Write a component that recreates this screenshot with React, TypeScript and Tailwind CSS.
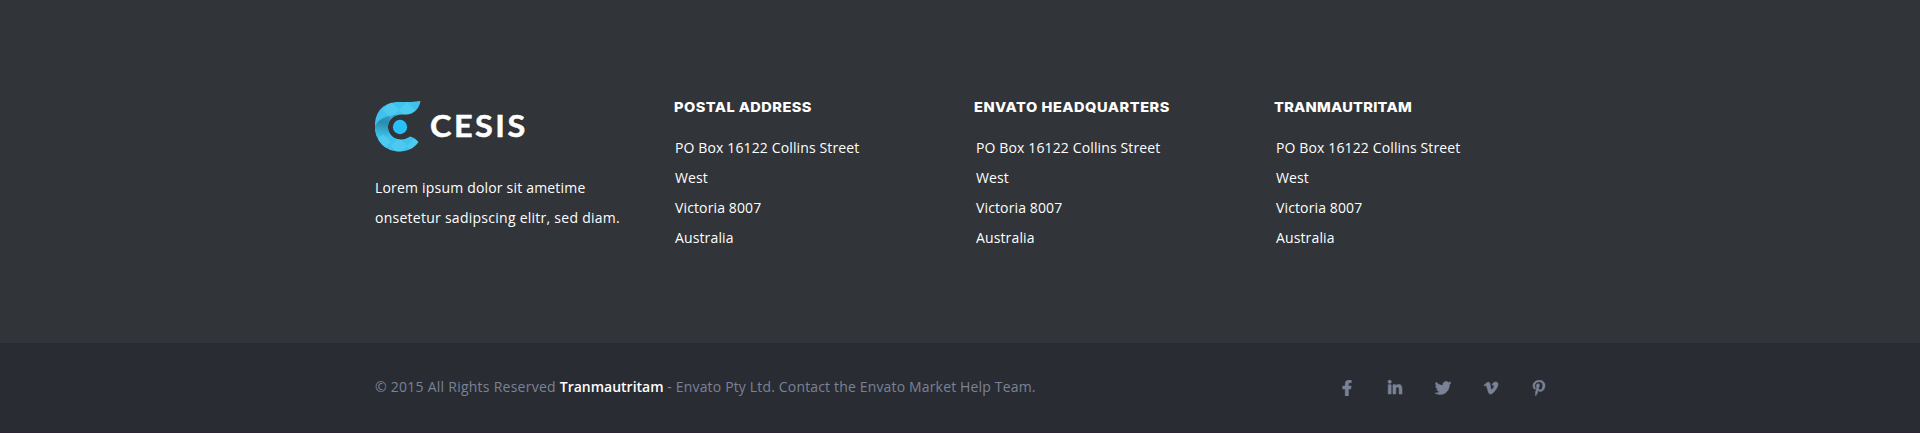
import React from "react";
import { FaFacebookF, FaLinkedinIn, FaTwitter, FaVimeoV, FaPinterestP } from "react-icons/fa";

function Mark() {
  return (
    <svg width="46" height="51" viewBox="0 0 46 51" className="shrink-0">
      <defs>
        <linearGradient id="fold" gradientUnits="userSpaceOnUse" x1="10" y1="15" x2="6" y2="36">
          <stop offset="0" stopColor="#2f9cc2" />
          <stop offset="0.3" stopColor="#2a8bad" />
          <stop offset="1" stopColor="#3fc3ee" />
        </linearGradient>
        <clipPath id="mark-shape">
          <path d="M0 25C0 9 10 1 24 1C33 1 39 1 45.500 0C44 8 39 13.500 31 13.500L27 13.500C19 13.500 13 19 13 26C13 33 19 38.500 26 38.500C30 38.500 33 37 35 35.500C38 36 41.500 38.500 43.500 41C39 47 33 50.500 25 50.500C10 50.500 0 40 0 25Z" />
        </clipPath>
      </defs>
      <g clipPath="url(#mark-shape)">
        <path d="M0 0H46V51H0Z" fill="#3fc3ee" />
        <path d="M0 25C4 17 14 13 27 13.500C19 13.500 13 19 13 26L14 36H0Z" fill="url(#fold)" />
        <path d="M8 9l8-8 8 8-8 8zM24 9l8-8 8 8-8 8zM0 41l8-8 8 8-8 8zM16 45l8-8 8 8-8 8zM32 45l8-8 8 8-8 8z" fill="#6ad6f6" fillOpacity="0.35" />
      </g>
      <circle cx="25" cy="26" r="7.200" fill="#27c0f8" />
    </svg>
  );
}

const columns = [
  { title: "POSTAL ADDRESS", indent: "pl-px", tracking: "tracking-[0.41px]" },
  { title: "ENVATO HEADQUARTERS", indent: "pl-[2px]", tracking: "tracking-[0.48px]" },
  { title: "TRANMAUTRITAM", indent: "pl-[2px]", tracking: "tracking-[0.25px]" },
];

const address = ["PO Box 16122 Collins Street", "West", "Victoria 8007", "Australia"];

const social = [
  { Icon: FaFacebookF, label: "Facebook" },
  { Icon: FaLinkedinIn, label: "LinkedIn" },
  { Icon: FaTwitter, label: "Twitter" },
  { Icon: FaVimeoV, label: "Vimeo" },
  { Icon: FaPinterestP, label: "Pinterest" },
];

export default function App() {
  return (
    <footer className="flex h-[433px] w-full flex-col bg-[#313438] text-[14px] text-white [font-family:'Open_Sans',sans-serif]">
      <div className="h-[343px] pt-[101px]">
        <div className="mx-auto grid w-[1170px] grid-cols-[299px_300px_300px_271px]">
          <div>
            <div className="flex h-[51px]">
              <Mark />
              <span className="ml-[9px] origin-left scale-x-108 text-[30px] leading-[49px] font-bold tracking-[2.3px] whitespace-nowrap [-webkit-text-stroke:0.5px_white] [font-family:Lato,sans-serif]">CESIS</span>
            </div>
            <p className="pt-[21px] leading-[30px] tracking-[0.19px] whitespace-nowrap">
              Lorem ipsum dolor sit ametime
              <br />
              <span className="tracking-[0.26px]">onsetetur sadipscing elitr, sed diam.</span>
            </p>
          </div>
          {columns.map((c) => (
            <div key={c.title}>
              <h3 className={`h-8 w-fit origin-left scale-x-108 text-[13.500px] leading-[13px] font-extrabold whitespace-nowrap [font-family:Inter,sans-serif] ${c.tracking}`}>{c.title}</h3>
              <address className={`leading-[30px] tracking-[0.13px] whitespace-nowrap not-italic ${c.indent}`}>
                {address.map((t) => <div key={t}>{t}</div>)}
              </address>
            </div>
          ))}
        </div>
      </div>
      <div className="h-[90px] border-b border-[#2c2433] bg-[#292c33]">
        <div className="mx-auto flex h-[88px] w-[1170px] items-center justify-between text-[#7a8296]">
          <p className="leading-[30px] whitespace-nowrap">
            <span className="tracking-[0.25px]">© 2015 All Rights Reserved </span>
            <span className="font-semibold text-white">Tranmautritam</span>
            <span className="tracking-[0.16px]"> - Envato Pty Ltd. Contact the Envato Market Help Team.</span>
          </p>
          <div className="-mr-[2px] flex gap-8 pt-px text-[16px]">
            {social.map(({ Icon, label }) => (
              <a key={label} aria-label={label} href="#"><Icon stroke="currentColor" strokeWidth="18" /></a>
            ))}
          </div>
        </div>
      </div>
    </footer>
  );
}
